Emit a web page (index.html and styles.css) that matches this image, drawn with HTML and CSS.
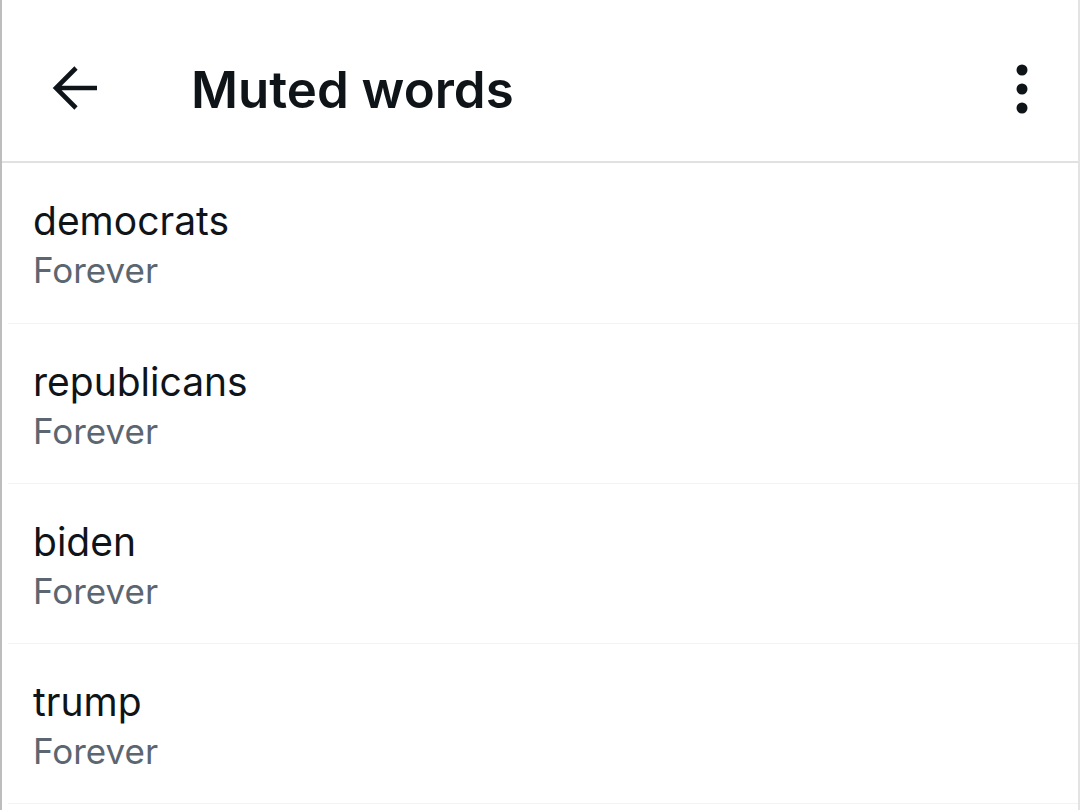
FILE: index.html
```html
<!DOCTYPE html>
<html>
<head>
<meta charset="utf-8">
<link rel="stylesheet" href="styles.css">
</head>
<body>
<div class="screen">
  <header class="topbar">
    <div class="back">
      <svg width="48" height="48" viewBox="0 0 48 48"><path d="M25 3 L5 23 L25 43 M5 23 H46" fill="none" stroke="#0f1419" stroke-width="4.6" stroke-linecap="butt" stroke-linejoin="miter"/></svg>
    </div>
    <h1 class="title">Muted words</h1>
    <div class="more">
      <svg width="14" height="52" viewBox="0 0 14 52"><circle cx="7" cy="7" r="5.5" fill="#0f1419"/><circle cx="7" cy="26" r="5.5" fill="#0f1419"/><circle cx="7" cy="45" r="5.5" fill="#0f1419"/></svg>
    </div>
  </header>
  <ul class="list">
    <li class="item"><div class="word">democrats</div><div class="dur">Forever</div></li>
    <li class="item"><div class="word">republicans</div><div class="dur">Forever</div></li>
    <li class="item"><div class="word">biden</div><div class="dur">Forever</div></li>
    <li class="item"><div class="word">trump</div><div class="dur">Forever</div></li>
  </ul>
</div>
</body>
</html>
```
FILE: styles.css
```css
html, body {
  margin: 0;
  padding: 0;
  background: #ffffff;
}
body {
  width: 1080px;
  height: 810px;
  overflow: hidden;
  font-family: "Inter", "Liberation Sans", sans-serif;
  color: #0f1419;
}
.screen {
  width: 1080px;
  height: 810px;
  box-sizing: border-box;
  border-left: 2px solid #bdbdbd;
  border-right: 2px solid #e3e3e3;
}
.topbar {
  height: 145px;
  padding-top: 16px;
  border-bottom: 2px solid #e1e1e1;
  display: flex;
  align-items: center;
  box-sizing: content-box;
}
.back {
  width: 48px;
  height: 48px;
  margin-left: 49px;
  display: flex;
}
.title {
  margin: 0 0 0 92px;
  font-size: 51px;
  font-weight: 600;
  letter-spacing: 0;
  flex: 1;
  line-height: 1;
  padding-top: 2px;
}
.more {
  width: 14px;
  height: 52px;
  margin-right: 49px;
  display: flex;
}
.list {
  list-style: none;
  margin: 0;
  padding: 0;
}
.item {
  height: 160px;
  border-bottom: 1px solid #f3f3f3;
  margin-left: 6px;
  padding-left: 25px;
  display: flex;
  flex-direction: column;
  justify-content: center;
  padding-top: 4px;
  box-sizing: border-box;
}
.item:first-child { height: 161px; }
.word {
  font-size: 39px;
  line-height: 50px;
  color: #0f1419;
}
.dur {
  font-size: 35px;
  line-height: 48px;
  color: #5b6670;
}
```
